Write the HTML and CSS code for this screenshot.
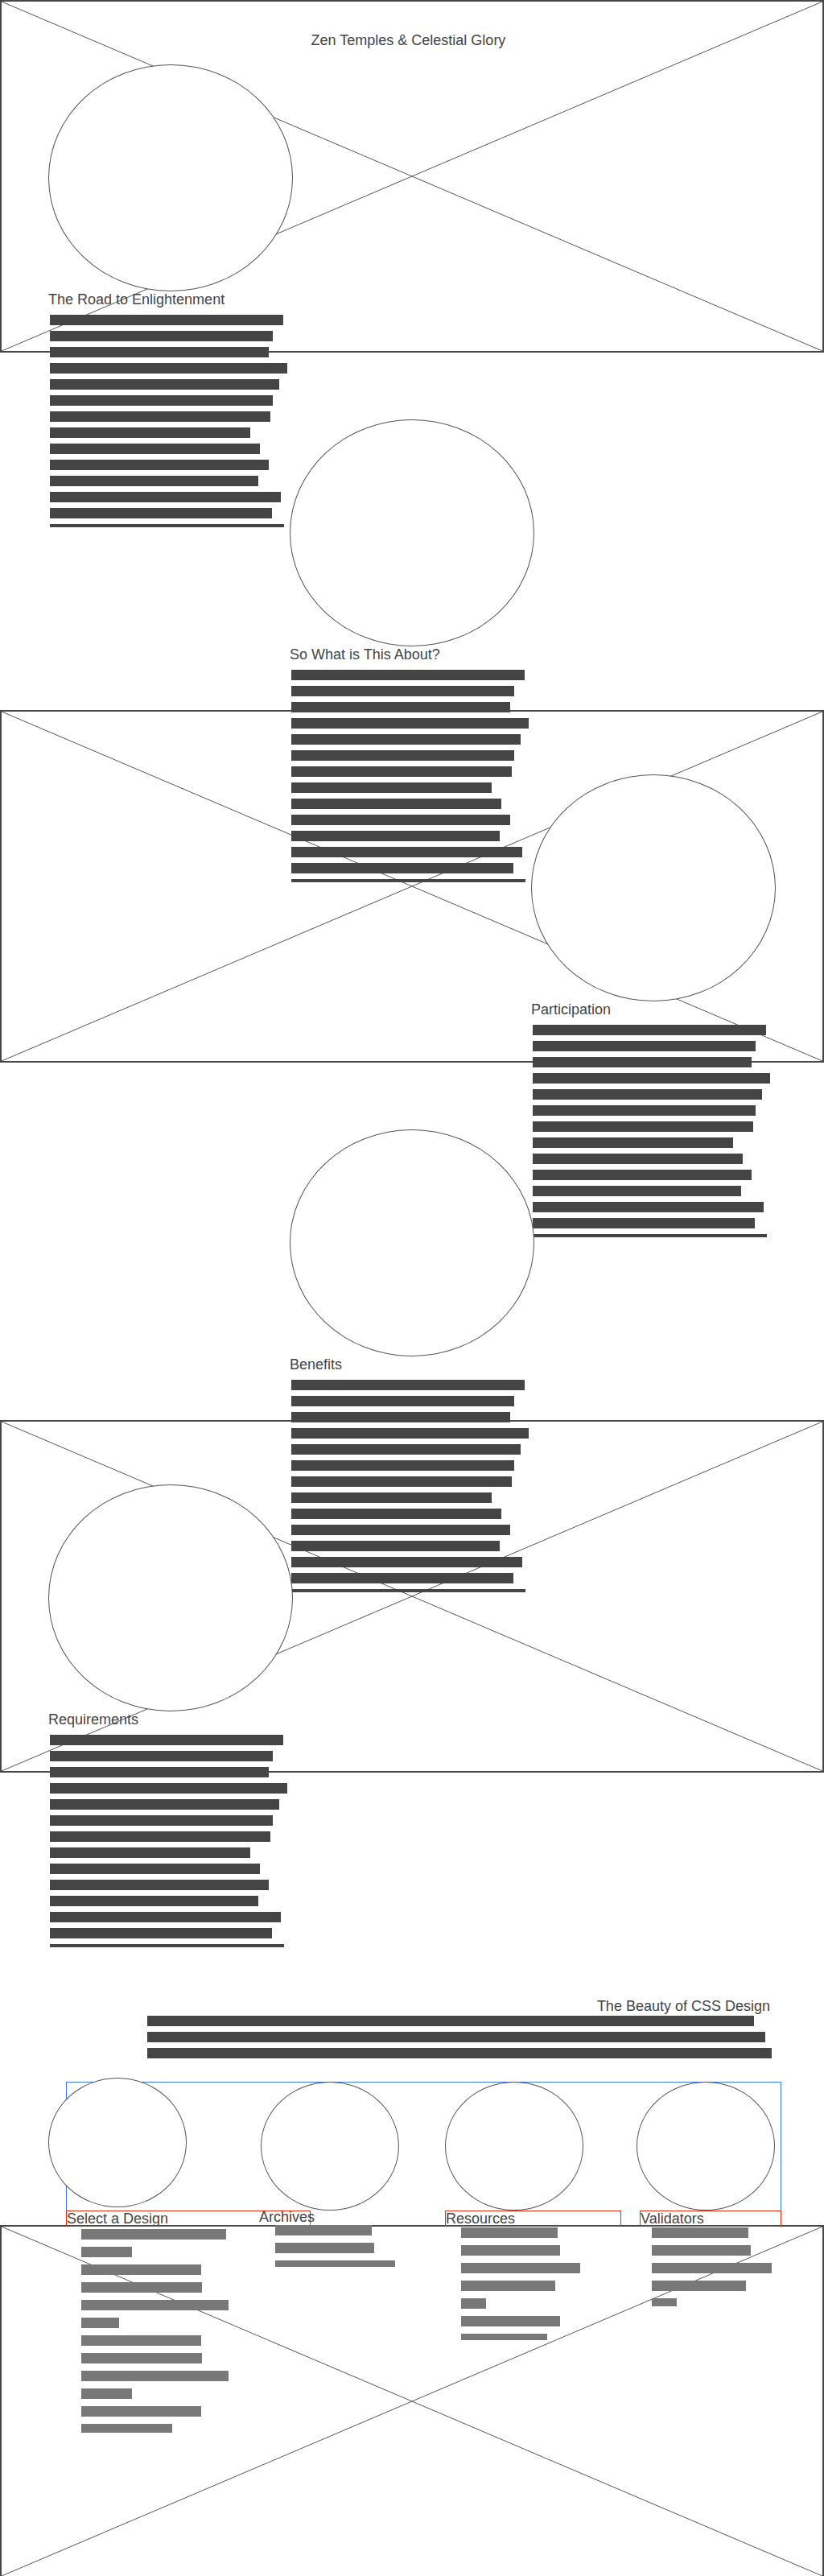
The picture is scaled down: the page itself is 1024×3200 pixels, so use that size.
FILE: index.html
```html
<!DOCTYPE html>
<html lang="en">
<head>
    <meta charset="UTF-8">
    <meta name="viewport" content="width=device-width, initial-scale=1.0">
    <title>Zen Temples &amp; Celestial Glory</title>
    <link rel="stylesheet" href="styles.css">
</head>
<body>
<div class="wrap">
    <!-- image placeholders behind the content -->
    <div class="backdrop">
        <div class="frame">
            <svg viewBox="0 0 100 100" preserveAspectRatio="none"><line x1="0" y1="0" x2="100" y2="100"/><line x1="0" y1="100" x2="100" y2="0"/></svg>
        </div>
        <div class="frame">
            <svg viewBox="0 0 100 100" preserveAspectRatio="none"><line x1="0" y1="0" x2="100" y2="100"/><line x1="0" y1="100" x2="100" y2="0"/></svg>
        </div>
        <div class="frame">
            <svg viewBox="0 0 100 100" preserveAspectRatio="none"><line x1="0" y1="0" x2="100" y2="100"/><line x1="0" y1="100" x2="100" y2="0"/></svg>
        </div>
        <div class="frame last">
            <svg viewBox="0 0 100 100" preserveAspectRatio="none"><line x1="0" y1="0" x2="100" y2="100"/><line x1="0" y1="100" x2="100" y2="0"/></svg>
        </div>
    </div>

    <div class="page">
        <header class="masthead">
            <h1>Zen Temples &amp; Celestial Glory</h1>
        </header>

        <section class="block at-left">
            <div class="orb"></div>
            <h2>The Road to Enlightenment</h2>
            <div class="lines" data-widths="290 277 272 295 285 277 274 249 261 272 259 287 276 291/4"></div>
        </section>

        <section class="block at-mid">
            <div class="orb"></div>
            <h2>So What is This About?</h2>
            <div class="lines" data-widths="290 277 272 295 285 277 274 249 261 272 259 287 276 291/4"></div>
        </section>

        <section class="block at-right">
            <div class="orb"></div>
            <h2>Participation</h2>
            <div class="lines" data-widths="290 277 272 295 285 277 274 249 261 272 259 287 276 291/4"></div>
        </section>

        <section class="block at-mid">
            <div class="orb"></div>
            <h2>Benefits</h2>
            <div class="lines" data-widths="290 277 272 295 285 277 274 249 261 272 259 287 276 291/4"></div>
        </section>

        <section class="block at-left">
            <div class="orb"></div>
            <h2>Requirements</h2>
            <div class="lines" data-widths="290 277 272 295 285 277 274 249 261 272 259 287 276 291/4"></div>
        </section>

        <div class="summary">
            <h2>The Beauty of CSS Design</h2>
            <div class="lines" data-widths="754 768 776"></div>
        </div>

        <div class="sidebar">
            <div class="col col-design">
                <div class="dot"></div>
                <h3>Select a Design</h3>
                <div class="lines" data-widths="180 63 149 150 183 47 149 150 183 63 149 113/11"></div>
            </div>
            <div class="col col-archives">
                <div class="dot"></div>
                <h3>Archives</h3>
                <div class="lines" data-widths="120 123 149/8"></div>
            </div>
            <div class="col col-resources">
                <div class="dot"></div>
                <h3>Resources</h3>
                <div class="lines" data-widths="120 123 148 117 31 123 107/8"></div>
            </div>
            <div class="col col-validators">
                <div class="dot"></div>
                <h3>Validators</h3>
                <div class="lines" data-widths="120 123 149 117 31/10"></div>
            </div>
        </div>
    </div>
</div>

<script>
    // turn each data-widths list into greyed-out text lines
    document.querySelectorAll('.lines').forEach(function (list) {
        list.dataset.widths.split(' ').forEach(function (item) {
            const parts = item.split('/');
            const bar = document.createElement('span');
            bar.style.width = parts[0] + 'px';
            if (parts[1]) {
                bar.style.height = parts[1] + 'px';
            }
            list.appendChild(bar);
        });
    });
</script>
</body>
</html>
```

FILE: styles.css
```css
body {
    margin: 0;
    font-family: "Liberation Sans", Arial, sans-serif;
    color: #444;
    background: #fff;
}

.wrap {
    position: relative;
    height: 3200px;
    overflow: hidden;
}

/* placeholder frames */
.backdrop {
    position: absolute;
    top: 0;
    left: 0;
    right: 0;
}

.frame {
    height: 438px;
    border: 2px solid #474747;
    box-sizing: border-box;
}

.frame + .frame {
    margin-top: 444px;
}

.frame.last {
    margin-top: 562px;
}

.frame svg {
    display: block;
    width: 100%;
    height: 100%;
}

.frame line {
    stroke: #555;
    stroke-width: 1;
    vector-effect: non-scaling-stroke;
}

/* content */
.page {
    position: relative;
}

h1, h2, h3 {
    margin: 0;
    font-size: 18px;
    font-weight: normal;
    line-height: 20px;
}

.masthead {
    height: 80px;
    padding: 40px 9px 0 0;
    box-sizing: border-box;
    text-align: center;
}

.block {
    height: 441px;
}

.at-left {
    margin-left: 60px;
}

.at-mid {
    margin-left: 360px;
}

.at-right {
    margin-left: 660px;
}

.orb {
    width: 302px;
    height: 280px;
    border: 1px solid #555;
    border-radius: 50%;
    background: #fff;
}

.lines {
    padding: 9px 0 0 2px;
}

.lines span {
    display: block;
    height: 13px;
    margin-bottom: 7px;
    background: #454545;
}

.summary {
    width: 776px;
    margin: 197px 0 0 183px;
}

.summary h2 {
    text-align: right;
    padding-right: 2px;
}

.summary .lines {
    padding: 2px 0 0;
}

/* sidebar */
.sidebar {
    display: flex;
    width: 889px;
    height: 180px;
    margin: 29px 0 0 82px;
    box-sizing: border-box;
    border: 1px solid #3c7ce0;
    border-bottom: none;
}

.col {
    flex: none;
}

.dot {
    width: 170px;
    height: 158px;
    border: 1px solid #555;
    border-radius: 50%;
    background: #fff;
}

.col h3 {
    line-height: 18px;
    height: 18px;
    outline: 1px solid #e8290b;
    white-space: nowrap;
}

.col .lines span {
    margin-bottom: 9px;
    background: #787878;
}

.col-design {
    width: 239px;
}

.col-design .dot {
    height: 159px;
    margin: -6px 0 0 -23px;
}

.col-design h3 {
    width: 302px;
    margin-top: 5px;
}

.col-design .lines {
    margin-top: 4px;
    padding: 0 0 0 18px;
}

.col-archives {
    width: 232px;
}

.col-archives .dot {
    margin: -1px 0 0 2px;
}

.col-archives h3 {
    margin-top: -1px;
    outline: none;
}

.col-archives .lines {
    margin-top: 1px;
    padding: 0 0 0 20px;
}

.col-resources {
    width: 242px;
}

.col-resources .dot {
    margin: -1px 0 0 -1px;
}

.col-resources h3 {
    width: 217px;
    margin-top: 1px;
}

.col-resources .lines {
    margin-top: 2px;
    padding: 0 0 0 19px;
}

.col-validators {
    width: 174px;
}

.col-validators .dot {
    margin: -1px 0 0 -5px;
}

.col-validators h3 {
    width: 174px;
    margin-top: 1px;
}

.col-validators .lines {
    margin-top: 2px;
    padding: 0 0 0 14px;
}
```
